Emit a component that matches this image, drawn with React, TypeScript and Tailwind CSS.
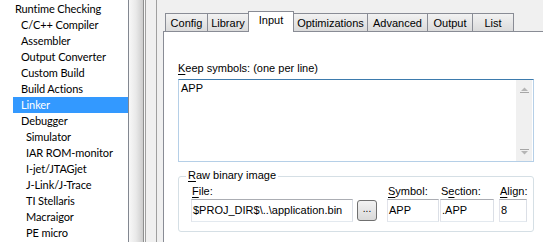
import React from "react";

const treeItems = [
  { label: "Runtime Checking", level: 0 },
  { label: "C/C++ Compiler", level: 1 },
  { label: "Assembler", level: 1 },
  { label: "Output Converter", level: 1 },
  { label: "Custom Build", level: 1 },
  { label: "Build Actions", level: 1 },
  { label: "Linker", level: 1, selected: true },
  { label: "Debugger", level: 1 },
  { label: "Simulator", level: 2 },
  { label: "IAR ROM-monitor", level: 2 },
  { label: "I-jet/JTAGjet", level: 2 },
  { label: "J-Link/J-Trace", level: 2 },
  { label: "TI Stellaris", level: 2 },
  { label: "Macraigor", level: 2 },
  { label: "PE micro", level: 2 },
];

const levelMargin = ["ml-[7px]", "ml-[13px]", "ml-[18px]"];

const tabs = [
  { label: "Config", w: "w-[43px]" },
  { label: "Library", w: "w-[42px]" },
  { label: "Input", w: "w-[46px]", active: true },
  { label: "Optimizations", w: "w-[75px]" },
  { label: "Advanced", w: "w-[61px]" },
  { label: "Output", w: "w-[46px]" },
  { label: "List", w: "w-[42px]" },
];

function TreeList() {
  return (
    <div className="w-[128px] bg-white pt-px font-['Lato','Open_Sans',sans-serif] text-[11px] tracking-[-0.1px] text-black">
      {treeItems.map((item) => (
        <div
          key={item.label}
          className={`h-[16px] leading-[16px] pl-[8px] whitespace-nowrap ${levelMargin[item.level]} ${
            item.selected ? "bg-[#3399ff] text-white" : ""
          }`}
        >
          {item.label}
        </div>
      ))}
    </div>
  );
}

function Splitter() {
  return (
    <div className="flex">
      <div className="w-px bg-[#828790]" />
      <div className="w-[14px] bg-gradient-to-r from-[#f8f8f8] via-[#e9e9e9] to-[#cdcdcd]" />
      <div className="w-px bg-[#8e8f8f]" />
      <div className="w-px bg-[#f7f7f7]" />
      <div className="w-px bg-[#a0a0a0]" />
      <div className="w-[10px] bg-[#f0f0f0]" />
      <div className="w-px bg-[#a0a0a0]" />
    </div>
  );
}

function Tab({ label, w, active }: { label: string; w: string; active?: boolean }) {
  if (active) {
    return (
      <div
        className={`${w} relative z-10 -ml-px -mb-px h-[21px] border border-b-0 border-[#898c95] bg-white pt-[2px] text-center leading-[13px]`}
      >
        {label}
      </div>
    );
  }
  return (
    <div
      className={`${w} -ml-px first:ml-0 h-[18px] border border-b-0 border-[#898c95] bg-gradient-to-b from-[#f2f2f2] to-[#dbdbdb] pt-[3px] text-center leading-[13px]`}
    >
      {label}
    </div>
  );
}

function Field({
  label,
  underline,
  value,
  w,
}: {
  label: string;
  underline: number;
  value: string;
  w: string;
}) {
  return (
    <div className="flex flex-col">
      <div className="h-[13px] pl-px leading-[13px] whitespace-nowrap">
        {label.slice(0, underline)}
        <span className="underline underline-offset-2">{label[underline]}</span>
        {label.slice(underline + 1)}
      </div>
      <div
        className={`${w} mt-px h-[23px] border border-[#abadb3] border-b-[#e3e9ef] border-l-[#e2e3ea] border-r-[#dbdfe6] bg-white pl-px leading-[21px] whitespace-nowrap overflow-hidden`}
      >
        {value}
      </div>
    </div>
  );
}

function ScrollArrow({ down }: { down?: boolean }) {
  return (
    <svg width="9" height="6" viewBox="0 0 9 6" className="block">
      {down ? (
        <>
          <rect x="0" y="0" width="9" height="1" fill="#a6a6a6" />
          <polygon points="1,2 8,2 4.5,5.5" fill="#b5b5b5" />
        </>
      ) : (
        <>
          <polygon points="4.5,0.5 8,4 1,4" fill="#b5b5b5" />
          <rect x="0" y="5" width="9" height="1" fill="#a6a6a6" />
        </>
      )}
    </svg>
  );
}

function InputPage() {
  return (
    <div className="flex-1 border-l border-t border-[#898c95] bg-white pl-[14px] pt-[30px]">
      <div className="h-[13px] leading-[13px]">
        <span className="underline underline-offset-2">K</span>eep symbols: (one per line)
      </div>
      <div className="mt-[4px] flex h-[83px] w-[356px] border border-[#b5cfe7] border-t-[#3d7bad] bg-white">
        <div className="flex-1 pl-[2px] pt-[2px] leading-[13px]">APP</div>
        <div className="mr-px flex w-[16px] flex-col items-center justify-between bg-[#f0f0f0] pb-[6px] pt-[7px]">
          <ScrollArrow />
          <ScrollArrow down />
        </div>
      </div>
      <div className="relative mt-[14px] w-[356px] rounded-[3px] border border-[#d5dfe5] pl-[12px] pt-[8px] pb-[9px]">
        <div className="absolute left-[7px] top-[-8px] bg-white px-[2px] leading-[13px]">
          <span className="underline underline-offset-2">R</span>aw binary image
        </div>
        <div className="flex items-start">
          <Field label="File:" underline={0} value="$PROJ_DIR$\..\application.bin" w="w-[162px]" />
          <button className="ml-[4px] mt-[15px] h-[21px] w-[20px] rounded-[3px] border border-[#707070] bg-gradient-to-b from-[#f2f2f2] to-[#d9d9d9] pb-[4px] text-[10px] leading-[10px]">
            ...
          </button>
          <div className="ml-[10px]">
            <Field label="Symbol:" underline={0} value="APP" w="w-[52px]" />
          </div>
          <div className="ml-[1px]">
            <Field label="Section:" underline={1} value=".APP" w="w-[54px]" />
          </div>
          <div className="ml-[5px]">
            <Field label="Align:" underline={0} value="8" w="w-[28px]" />
          </div>
        </div>
      </div>
    </div>
  );
}

export default function App() {
  return (
    <div className="flex h-[242px] w-[543px] overflow-hidden bg-[#f0f0f0] font-['Liberation_Sans',Arial,sans-serif] text-[11px] text-black">
      <TreeList />
      <Splitter />
      <div className="flex flex-1 flex-col pl-[6px] pt-[11px]">
        <div className="flex h-[20px] items-end pl-[2px]">
          {tabs.map((t) => (
            <Tab key={t.label} {...t} />
          ))}
        </div>
        <InputPage />
      </div>
    </div>
  );
}
